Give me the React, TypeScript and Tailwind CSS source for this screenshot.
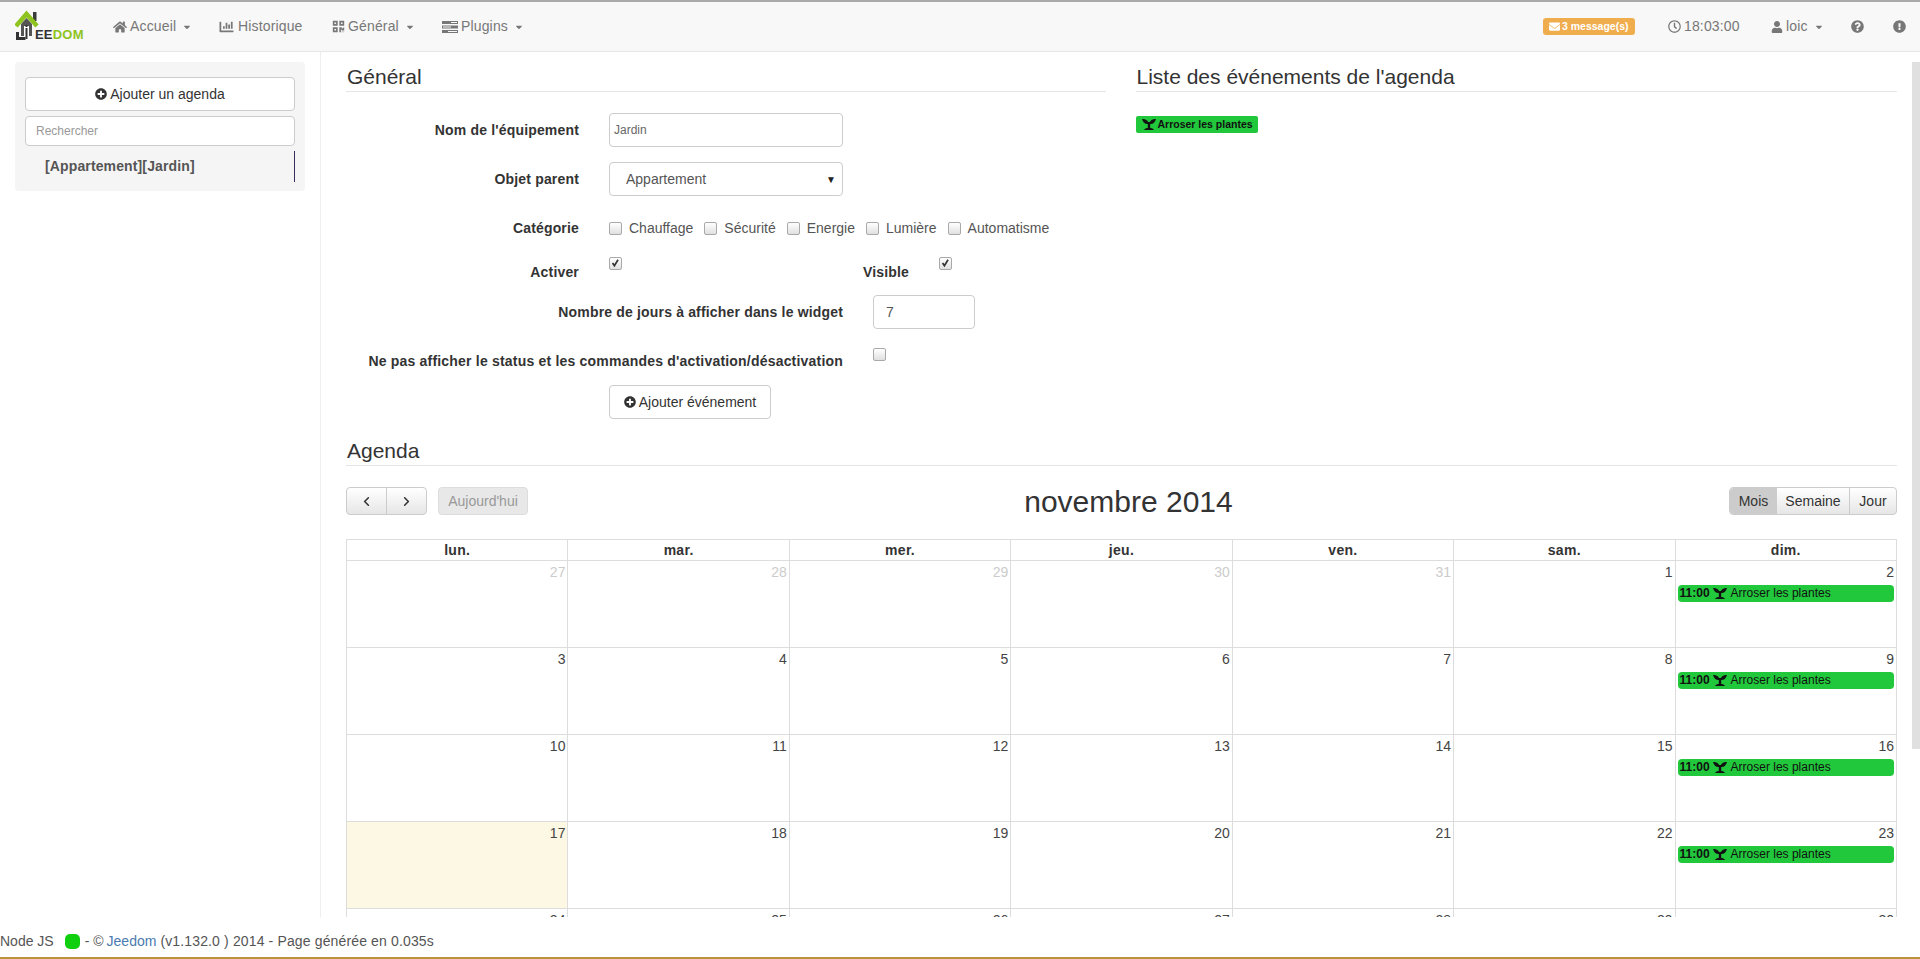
import { ReactNode } from "react";
import {
  FaCaretDown,
  FaChartBar,
  FaEnvelope,
  FaExclamationCircle,
  FaHome,
  FaPlusCircle,
  FaQrcode,
  FaQuestionCircle,
  FaRegClock,
  FaUser,
} from "react-icons/fa";
import { LuChevronLeft, LuChevronRight } from "react-icons/lu";

const font = "font-['Liberation_Sans',Arial,sans-serif]";

function Logo() {
  return (
    <div className="relative w-[72px] h-[34px]">
      <svg width="72" height="34" viewBox="0 0 72 34">
        <rect x="18" y="2" width="3.5" height="9" fill="#3a3a3a" />
        <path d="M6 14 L11.5 8 L17 14 V26 H6 Z" fill="#555" />
        <path d="M1 16 L11.5 4 L22 16" stroke="#8fc31f" strokeWidth="4.5" fill="none" />
        <rect x="9" y="16" width="5" height="14" fill="#fff" />
        <rect x="10.5" y="15" width="2" height="2" fill="#333" />
        <rect x="10.5" y="18" width="2" height="11" fill="#333" />
        <path d="M1 22 H4 V27 H10.5 V30 H1 Z" fill="#333" />
      </svg>
      <span className="absolute left-[20px] top-[17px] text-[13px] leading-[16px] font-bold tracking-[0.2px] text-[#333]">
        EE<span className="text-[#8fc31f]">DOM</span>
      </span>
    </div>
  );
}

function TasksIcon() {
  return (
    <svg width="16" height="12" viewBox="0 0 16 12" fill="#777">
      <rect x="0" y="0" width="16" height="3" />
      <rect x="0" y="4.5" width="16" height="3" />
      <rect x="0" y="9" width="16" height="3" />
      <rect x="9" y="1" width="6" height="1" fill="#f8f8f8" />
      <rect x="1" y="5.5" width="8" height="1" fill="#f8f8f8" />
      <rect x="6" y="10" width="9" height="1" fill="#f8f8f8" />
    </svg>
  );
}

function Sprout() {
  return (
    <svg width="14" height="11" viewBox="0 0 14 11" fill="#111" className="shrink-0">
      <path d="M0 0 C4 0 6.4 1.5 6.4 5 C3 5.5 1 3.5 0 0 Z" />
      <path d="M14 0 C10 0 7.6 1.5 7.6 5 C11 5.5 13 3.5 14 0 Z" />
      <rect x="5.8" y="3" width="2.4" height="6" />
      <path d="M2 11 C3.5 8 10.5 8 12 11 Z" />
    </svg>
  );
}

function NavItem({ icon, label, caret, width }: { icon: ReactNode; label: string; caret?: boolean; width: string }) {
  return (
    <div className={`flex items-center gap-[3px] text-[14px] tracking-[0.15px] text-[#777] ${width}`}>
      {icon}
      <span>{label}</span>
      {caret && <FaCaretDown className="ml-[3px] w-[10px] h-[10px]" />}
    </div>
  );
}

function Field({ label, children }: { label: string; children: ReactNode }) {
  return (
    <div className="flex items-center h-[34px]">
      <label className="w-[233px] text-right text-[14px] font-bold text-[#333] tracking-[0.17px]">{label}</label>
      <div className="ml-[30px]">{children}</div>
    </div>
  );
}

function Box({ checked }: { checked?: boolean }) {
  return (
    <span className="relative inline-block w-[13px] h-[13px] rounded-[2px] border border-[#a9a9a9] bg-[linear-gradient(#fff,#e0e0e0)] shrink-0">
      {checked && (
        <svg viewBox="0 0 13 13" width="11" height="11" className="absolute left-0 top-0">
          <path d="M3 6 L5.2 9 L9.5 2" stroke="#333" strokeWidth="2" fill="none" />
        </svg>
      )}
    </span>
  );
}

function Heading({ children }: { children: ReactNode }) {
  return (
    <h2 className="h-[31px] border-b border-[#e5e5e5] px-px pt-[4px] text-[21px] leading-[24px] text-[#333]">
      {children}
    </h2>
  );
}

function EventBar() {
  return (
    <div className="mx-[2px] h-[17px] flex items-center gap-[3px] rounded-[4px] bg-[#22c83c] pl-[2px] text-[12px] leading-[17px] text-[#111]">
      <b>11:00</b>
      <Sprout />
      <span className="ml-px">Arroser les plantes</span>
    </div>
  );
}

const weekDays = ["lun.", "mar.", "mer.", "jeu.", "ven.", "sam.", "dim."];
const weeks = [
  [27, 28, 29, 30, 31, 1, 2],
  [3, 4, 5, 6, 7, 8, 9],
  [10, 11, 12, 13, 14, 15, 16],
  [17, 18, 19, 20, 21, 22, 23],
  [24, 25, 26, 27, 28, 29, 30],
];

function Calendar() {
  return (
    <div className="mt-[24px] border-l border-t border-[#ddd] grid grid-cols-7">
      {weekDays.map((d) => (
        <div key={d} className="h-[21px] border-r border-b border-[#ddd] text-center text-[14px] leading-[20px] font-bold text-[#333] tracking-[0.3px]">
          {d}
        </div>
      ))}
      {weeks.map((week, w) =>
        week.map((day, i) => (
          <div
            key={`${w}-${i}`}
            className={`h-[87px] border-r border-b border-[#ddd] ${w === 3 && i === 0 ? "bg-[#fcf8e3]" : ""}`}
          >
            <div className={`h-[24px] pr-[2px] pt-[1px] text-right text-[14px] leading-[20px] ${w === 0 && i < 5 ? "text-[#ccc]" : "text-[#444]"}`}>
              {day}
            </div>
            {i === 6 && w < 4 && <EventBar />}
          </div>
        )),
      )}
    </div>
  );
}

export default function App() {
  return (
    <div className={`${font} h-[959px] flex flex-col overflow-hidden bg-white text-[14px] text-[#333]`}>
      {/* Navbar */}
      <header className="h-[52px] shrink-0 flex items-center border-t-2 border-b border-t-[#aaa] border-b-[#e7e7e7] bg-[#f8f8f8] pl-[15px]">
        <Logo />
        <div className="flex items-center ml-[26px]">
          <NavItem width="w-[105px]" icon={<FaHome className="w-[14px] h-[14px]" />} label="Accueil" caret />
          <NavItem width="w-[114px]" icon={<FaChartBar className="w-[17px] h-[14px]" />} label="Historique" />
          <NavItem width="w-[110px]" icon={<FaQrcode className="w-[13px] h-[13px]" />} label="Général" caret />
          <NavItem width="w-[90px]" icon={<TasksIcon />} label="Plugins" caret />
        </div>
        <div className="ml-auto flex items-center">
          <span className="flex items-center gap-[2px] w-[92px] h-[17px] rounded-[3px] bg-[#f0ad4e] pl-[6px] text-[10.5px] font-bold text-white">
            <FaEnvelope className="w-[11px] h-[11px]" />3 message(s)
          </span>
          <NavItem width="w-[103px] ml-[33px]" icon={<FaRegClock className="w-[13px] h-[13px]" />} label="18:03:00" />
          <NavItem width="w-[80px]" icon={<FaUser className="w-[12px] h-[12px]" />} label="loic" caret />
          <FaQuestionCircle className="w-[13px] h-[13px] text-[#777]" />
          <FaExclamationCircle className="ml-[29px] mr-[14px] w-[13px] h-[13px] text-[#777]" />
        </div>
      </header>

      {/* Main area, cut off above the footer */}
      <div className="h-[865px] shrink-0 flex overflow-hidden">
        <aside className="w-[321px] shrink-0 border-r border-[#eee] pl-[15px] pt-[10px]">
          <div className="w-[290px] h-[129px] rounded-[4px] bg-[#f5f5f5] px-[10px] pt-[15px]">
            <button className="w-full h-[34px] flex items-center justify-center gap-[3px] rounded-[4px] border border-[#ccc] bg-white text-[14px] text-[#333]">
              <FaPlusCircle className="w-[12px] h-[12px]" />
              Ajouter un agenda
            </button>
            <div className="mt-[5px] h-[30px] flex items-center rounded-[4px] border border-[#ccc] bg-white px-[10px] text-[12px] text-[#999]">
              Rechercher
            </div>
            <div className="flex justify-between">
              <span className="mt-[10px] pl-[20px] text-[14px] font-bold text-[#555] tracking-[0.13px]">[Appartement][Jardin]</span>
              <span className="mt-[5px] w-px h-[31px] bg-[#3d2b5e]" />
            </div>
          </div>
        </aside>

        <main className="w-[1591px] shrink-0 pl-[25px] pr-[15px] pt-[9px]">
          <div className="flex gap-[30px]">
            <section className="w-[760px]">
              <Heading>Général</Heading>
              <div className="mt-[21px]">
                <Field label="Nom de l'équipement">
                  <div className="w-[234px] h-[34px] flex items-center rounded-[4px] border border-[#ccc] px-[4px] text-[12px] text-[#666]">Jardin</div>
                </Field>
                <div className="mt-[15px]">
                  <Field label="Objet parent">
                    <div className="w-[234px] h-[34px] flex items-center justify-between rounded-[4px] border border-[#ccc] pl-[16px] pr-[6px] text-[14px] text-[#555]">
                      Appartement
                      <span className="text-[10px] text-[#222]">▼</span>
                    </div>
                  </Field>
                </div>
                <div className="mt-[15px]">
                  <Field label="Catégorie">
                    <div className="flex items-center text-[14px] text-[#555]">
                      {["Chauffage", "Sécurité", "Energie", "Lumière", "Automatisme"].map((c) => (
                        <span key={c} className="flex items-center gap-[7px] mr-[11px]">
                          <Box />
                          {c}
                        </span>
                      ))}
                    </div>
                  </Field>
                </div>
                <div className="mt-[8px] h-[34px] flex">
                  <label className="mt-[9px] w-[233px] text-right font-bold tracking-[0.17px]">Activer</label>
                  <div className="ml-[30px] mt-[2px]"><Box checked /></div>
                  <label className="ml-[241px] mt-[9px] font-bold tracking-[0.17px]">Visible</label>
                  <div className="ml-[30px] mt-[2px]"><Box checked /></div>
                </div>
                <div className="mt-[8px] flex h-[34px] items-center">
                  <label className="w-[497px] text-right font-bold tracking-[0.17px]">Nombre de jours à afficher dans le widget</label>
                  <div className="ml-[30px] w-[102px] h-[34px] flex items-center rounded-[4px] border border-[#ccc] px-[12px] text-[#555]">7</div>
                </div>
                <div className="mt-[15px] flex h-[34px]">
                  <label className="mt-[7px] w-[497px] text-right font-bold tracking-[0.2px] whitespace-nowrap">Ne pas afficher le status et les commandes d'activation/désactivation</label>
                  <div className="ml-[30px] mt-[2px]"><Box /></div>
                </div>
                <div className="mt-[7px] ml-[263px]">
                  <button className="h-[34px] w-[162px] flex items-center justify-center gap-[3px] rounded-[4px] border border-[#ccc] text-[14px] text-[#333]">
                    <FaPlusCircle className="w-[12px] h-[12px]" />
                    Ajouter événement
                  </button>
                </div>
              </div>
            </section>
            <section className="w-[762px]">
              <Heading>Liste des événements de l'agenda</Heading>
              <div className="mt-[24px] flex">
                <span className="h-[17px] w-[122px] flex items-center gap-[2px] rounded-[2px] bg-[#22c83c] pl-[6px] text-[10.5px] font-bold text-[#111]">
                  <Sprout />
                  Arroser les plantes
                </span>
              </div>
            </section>
          </div>

          <div className="mt-[16px]">
            <Heading>Agenda</Heading>
            <div className="mt-[21px] h-[28px] flex items-center justify-between relative">
              <div className="flex gap-[11px]">
                <div className="flex h-[28px] rounded-[4px] border border-[#ccc] bg-[linear-gradient(#fff,#e6e6e6)]">
                  <span className="w-[40px] flex items-center justify-center border-r border-[#ccc] text-[#333]"><LuChevronLeft className="w-[15px] h-[15px]" strokeWidth={2.5} /></span>
                  <span className="w-[39px] flex items-center justify-center text-[#333]"><LuChevronRight className="w-[15px] h-[15px]" strokeWidth={2.5} /></span>
                </div>
                <span className="w-[90px] h-[28px] flex items-center justify-center rounded-[4px] border border-[#ddd] bg-[#e8e8e8] text-[#999]">Aujourd'hui</span>
              </div>
              <h1 className="text-[30px] leading-[33px] text-[#333]">novembre 2014</h1>
              <div className="flex h-[28px] rounded-[4px] border border-[#ccc] text-[14px] text-[#333] bg-[linear-gradient(#fff,#e6e6e6)]">
                <span className="w-[47px] flex items-center justify-center rounded-l-[4px] bg-[#ccc]">Mois</span>
                <span className="w-[73px] flex items-center justify-center border-r border-[#ccc]">Semaine</span>
                <span className="w-[46px] flex items-center justify-center">Jour</span>
              </div>
            </div>
            <Calendar />
          </div>
        </main>

        {/* Scrollbar */}
        <div className="ml-auto w-[8px] pt-[10px]">
          <div className="h-[687px] bg-[#e0e0e0]" />
        </div>
      </div>

      {/* Footer */}
      <footer className="flex-1 flex items-center text-[14px] text-[#555] pt-[8px]">
        Node JS
        <span className="ml-[11px] mr-[5px] w-[15px] h-[15px] rounded-[5px] bg-[#0fcf0f]" />
        - © <span className="ml-[3px] mr-[4px] text-[#4a7bb0]">Jeedom</span>
        <span className="tracking-[0.14px]">(v1.132.0 ) 2014 - Page générée en 0.035s</span>
      </footer>
      <div className="h-[2px] shrink-0 bg-[#b8923f]" />
    </div>
  );
}
